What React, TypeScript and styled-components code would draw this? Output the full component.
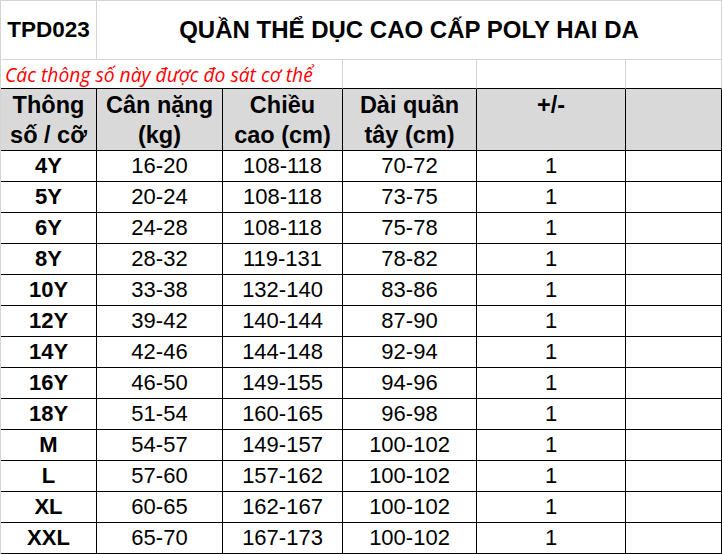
import React from "react";
import styled, { createGlobalStyle } from "styled-components";

const GlobalStyle = createGlobalStyle`
  html, body {
    margin: 0;
    padding: 0;
    background: #fff;
  }
  * {
    box-sizing: border-box;
  }
`;

const headers = ["Thông\nsố / cỡ", "Cân nặng\n(kg)", "Chiều\ncao (cm)", "Dài quần\ntây (cm)", "+/-", ""];

const rows: [string, string, string, string, string][] = [
  ["4Y", "16-20", "108-118", "70-72", "1"],
  ["5Y", "20-24", "108-118", "73-75", "1"],
  ["6Y", "24-28", "108-118", "75-78", "1"],
  ["8Y", "28-32", "119-131", "78-82", "1"],
  ["10Y", "33-38", "132-140", "83-86", "1"],
  ["12Y", "39-42", "140-144", "87-90", "1"],
  ["14Y", "42-46", "144-148", "92-94", "1"],
  ["16Y", "46-50", "149-155", "94-96", "1"],
  ["18Y", "51-54", "160-165", "96-98", "1"],
  ["M", "54-57", "149-157", "100-102", "1"],
  ["L", "57-60", "157-162", "100-102", "1"],
  ["XL", "60-65", "162-167", "100-102", "1"],
  ["XXL", "65-70", "167-173", "100-102", "1"],
];

const App = () => {
  return (
    <>
      <GlobalStyle />
      <Sheet>
        <TitleCell>TPD023</TitleCell>
        <TitleCell $span={5} $size={24}>QUẦN THỂ DỤC CAO CẤP POLY HAI DA</TitleCell>

        <NoteCell $span={3}>Các thông số này được đo sát cơ thể</NoteCell>
        <NoteCell />
        <NoteCell />
        <NoteCell />

        {headers.map((h, i) => (
          <HeadCell key={i}>{h}</HeadCell>
        ))}

        {rows.map((r) => (
          <React.Fragment key={r[0]}>
            <DataCell $bold>{r[0]}</DataCell>
            <DataCell>{r[1]}</DataCell>
            <DataCell>{r[2]}</DataCell>
            <DataCell>{r[3]}</DataCell>
            <DataCell>{r[4]}</DataCell>
            <DataCell />
          </React.Fragment>
        ))}
      </Sheet>
    </>
  );
};

export default App;

const Sheet = styled.div`
  display: grid;
  grid-template-columns: 96px 126px 120px 134px 149px 96px;
  grid-template-rows: 59px 29px 62px repeat(13, 31px);
  width: 722px;
  height: 554px;
  border-top: 1px solid #d4d4d4;
  border-left: 1px solid #d4d4d4;
  font-family: "Liberation Sans", Arial, sans-serif;
  font-size: 22px;
  color: #000;
  overflow: hidden;
`;

const TitleCell = styled.div<{ $span?: number; $size?: number }>`
  grid-column: span ${(p) => p.$span ?? 1};
  display: flex;
  align-items: center;
  justify-content: center;
  font-weight: bold;
  font-size: ${(p) => p.$size ?? 22.5}px;
  border-right: 1px solid #d4d4d4;
  border-bottom: 1px solid #d4d4d4;
  white-space: nowrap;
`;

const NoteCell = styled.div<{ $span?: number }>`
  grid-column: span ${(p) => p.$span ?? 1};
  display: flex;
  align-items: center;
  padding-left: 4px;
  padding-top: 1px;
  font-family: "Open Sans", "Noto Sans", sans-serif;
  font-style: italic;
  font-size: 19.3px;
  color: #ff0000;
  border-right: 1px solid #d4d4d4;
  border-bottom: 1px solid #000;
  white-space: nowrap;
`;

const HeadCell = styled.div`
  background: #d9d9d9;
  text-align: center;
  font-weight: bold;
  font-size: 23.5px;
  line-height: 30px;
  padding-top: 1px;
  white-space: pre-line;
  border-right: 1px solid #000;
  border-bottom: 1px solid #000;
`;

const DataCell = styled.div<{ $bold?: boolean }>`
  display: flex;
  align-items: center;
  justify-content: center;
  font-weight: ${(p) => (p.$bold ? "bold" : "normal")};
  border-right: 1px solid #000;
  border-bottom: 1px solid #000;
`;
